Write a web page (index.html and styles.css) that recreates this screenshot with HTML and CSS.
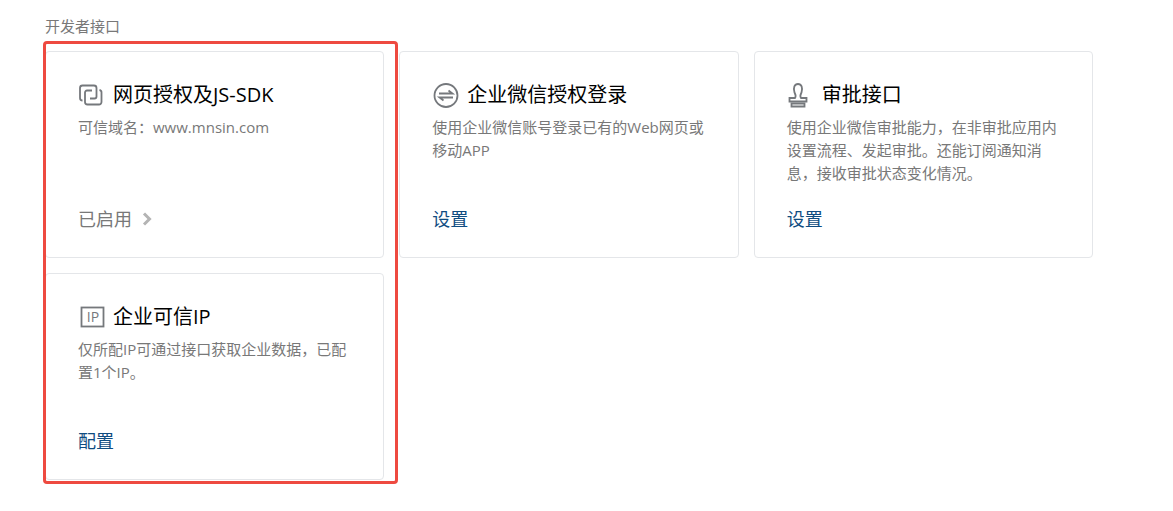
FILE: index.html
```html
<!DOCTYPE html>
<html lang="zh-CN">
<head>
    <meta charset="UTF-8">
    <meta name="viewport" content="width=device-width, initial-scale=1.0">
    <title>开发者接口</title>
    <link rel="stylesheet" href="styles.css">
</head>
<body>
    <main class="page">
        <h1 class="page-title">开发者接口</h1>
        <div class="cards">
            <section class="card">
                <h2 class="card-title">
                    <svg class="icon" viewBox="0 0 26 26" aria-hidden="true">
                        <path d="M4.5 18.5A2.5 2.5 0 0 1 2 16V6a2.5 2.5 0 0 1 2.5-2.5H16A2.5 2.5 0 0 1 18.5 6v8.500a2 2 0 0 1-2 2H12"/>
                        <path d="M21.500 8a2.500 2.500 0 0 1 2 2.500V20a2.500 2.500 0 0 1-2.500 2.500H9.500A2.500 2.500 0 0 1 7 20v-9.500a2 2 0 0 1 2-2h5"/>
                    </svg>
                    网页授权及JS-SDK
                </h2>
                <p class="card-desc">可信域名：www.mnsin.com</p>
                <a class="card-link enabled" href="#">已启用
                    <svg class="arrow" viewBox="0 0 10 14" aria-hidden="true"><path d="M2 1.500L7.500 7L2 12.500"/></svg>
                </a>
            </section>
            <section class="card">
                <h2 class="card-title">
                    <svg class="icon" viewBox="0 0 26 26" aria-hidden="true">
                        <circle cx="14" cy="13.500" r="11.500"/>
                        <path d="M7 11.500h13.500l-4-3M21 15.500H7.500l4 3"/>
                    </svg>
                    企业微信授权登录
                </h2>
                <p class="card-desc">使用企业微信账号登录已有的Web网页或移动APP</p>
                <a class="card-link" href="#">设置</a>
            </section>
            <section class="card">
                <h2 class="card-title">
                    <svg class="icon" viewBox="0 0 26 26" aria-hidden="true">
                        <path d="M2.500 19.500v-3.500H8c1.500-2 .5-3.500-.5-5.500C6 5.500 7.500 2 11 2s5 3.500 3.500 8.500c-1 2-2 3.500-.5 5.500h5.500v3.500z"/>
                        <path d="M4.500 21.500h13v3h-13z"/>
                    </svg>
                    审批接口
                </h2>
                <p class="card-desc">使用企业微信审批能力，在非审批应用内设置流程、发起审批。还能订阅通知消息，接收审批状态变化情况。</p>
                <a class="card-link" href="#">设置</a>
            </section>
            <section class="card">
                <h2 class="card-title">
                    <svg class="icon" viewBox="0 0 26 26" aria-hidden="true">
                        <rect x="3.500" y="3.500" width="22" height="19"/>
                        <text class="icon-text" x="15" y="18">IP</text>
                    </svg>
                    企业可信IP
                </h2>
                <p class="card-desc">仅所配IP可通过接口获取企业数据，已配置1个IP。</p>
                <a class="card-link" href="#">配置</a>
            </section>
            <div class="highlight"></div>
        </div>
    </main>
</body>
</html>
```
FILE: styles.css
```css
* {
    box-sizing: border-box;
}
body {
    margin: 0;
    background-color: #fff;
    color: #787878;
    font-family: "Open Sans", "Noto Sans CJK SC", sans-serif;
    font-size: 15px;
}
.page {
    padding: 15px 80px 30px 45px;
}
.page-title {
    margin: 0 0 13px;
    font-size: 15px;
    font-weight: 400;
    line-height: 23px;
}
.cards {
    position: relative;
    display: grid;
    grid-template-columns: repeat(3, 1fr);
    gap: 15px;
}
.card {
    display: flex;
    flex-direction: column;
    align-items: flex-start;
    padding: 30px 32px 25px;
    border: 1px solid #e4e6e9;
    border-radius: 4px;
}
.card-title {
    display: flex;
    align-items: center;
    gap: 9px;
    margin: 0 0 8px;
    color: #000;
    font-size: 20px;
    font-weight: 400;
    line-height: 26px;
}
.icon {
    width: 26px;
    height: 26px;
    overflow: visible;
    fill: none;
    stroke: #75787c;
    stroke-width: 1.8;
}
.icon-text {
    fill: #75787c;
    stroke: none;
    font-size: 14px;
    text-anchor: middle;
}
.card-desc {
    min-height: 69px;
    margin: 0 0 21px;
    line-height: 23px;
}
.card-link {
    display: flex;
    align-items: center;
    gap: 10px;
    color: #0f4c81;
    font-size: 18px;
    line-height: 26px;
    text-decoration: none;
}
.enabled {
    color: #787878;
}
.arrow {
    width: 10px;
    height: 14px;
    fill: none;
    stroke: #b4b4b4;
    stroke-width: 3;
}
/* red frame around the first column */
.highlight {
    position: absolute;
    grid-area: 1 / 1 / 3 / 2;
    inset: -10px -14px -4px -2px;
    border: 3px solid #ee4a40;
    border-radius: 4px;
    pointer-events: none;
}
```
